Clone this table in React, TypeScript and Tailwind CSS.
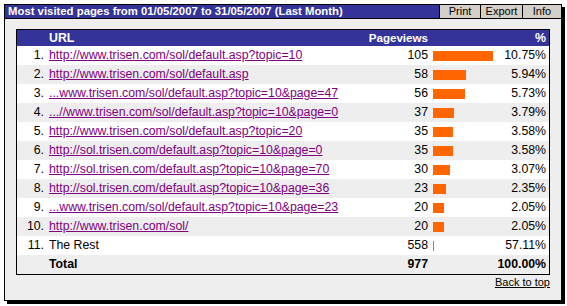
import React from "react";

type Row = { url: string; views: number; pct: string; link: boolean };

const rows: Row[] = [
  { url: "http://www.trisen.com/sol/default.asp?topic=10", views: 105, pct: "10.75%", link: true },
  { url: "http://www.trisen.com/sol/default.asp", views: 58, pct: "5.94%", link: true },
  { url: "...www.trisen.com/sol/default.asp?topic=10&page=47", views: 56, pct: "5.73%", link: true },
  { url: "...//www.trisen.com/sol/default.asp?topic=10&page=0", views: 37, pct: "3.79%", link: true },
  { url: "http://www.trisen.com/sol/default.asp?topic=20", views: 35, pct: "3.58%", link: true },
  { url: "http://sol.trisen.com/default.asp?topic=10&page=0", views: 35, pct: "3.58%", link: true },
  { url: "http://sol.trisen.com/default.asp?topic=10&page=70", views: 30, pct: "3.07%", link: true },
  { url: "http://sol.trisen.com/default.asp?topic=10&page=36", views: 23, pct: "2.35%", link: true },
  { url: "...www.trisen.com/sol/default.asp?topic=10&page=23", views: 20, pct: "2.05%", link: true },
  { url: "http://www.trisen.com/sol/", views: 20, pct: "2.05%", link: true },
  { url: "The Rest", views: 558, pct: "57.11%", link: false },
];

const font = { fontFamily: '"Liberation Sans", Arial, sans-serif' };

export default function App() {
  return (
    <div className="w-[567px] h-[306px] bg-white pl-[4px] pt-[4px]" style={font}>
      <div className="w-[558px] h-[297px] border border-black bg-[#eeeeee] shadow-[3px_3px_0_#000] flex flex-col">
        <div className="h-[14px] border-b border-black bg-[#333399] flex items-stretch">
          <div className="flex-1 pl-[3px] text-white font-bold text-[11.35px] leading-[13px] whitespace-nowrap">
            Most visited pages from 01/05/2007 to 31/05/2007 (Last Month)
          </div>
          <div className="w-[41px] border-l border-black bg-[#d4d0c8] text-black text-[11px] leading-[13px] text-center">Print</div>
          <div className="w-[42px] border-l border-black bg-[#d4d0c8] text-black text-[11px] leading-[13px] text-center">Export</div>
          <div className="w-[39px] border-l border-black bg-[#d4d0c8] text-black text-[11px] leading-[13px] text-center">Info</div>
        </div>
        <div className="pt-[10px] pl-[11px] pr-[11px]">
          <div className="w-[534px] border border-black text-[12.3px] text-black">
            <div className="h-[16px] bg-[#333399] text-white font-bold grid grid-cols-[29px_321px_64px_66px_52px] items-center leading-[16px]">
              <div />
              <div className="pl-[3px]">URL</div>
              <div className="text-right pr-[3px] text-[11.6px]">Pageviews</div>
              <div />
              <div className="text-right pr-[3px]">%</div>
            </div>
            {rows.map((r, i) => (
              <div
                key={i}
                className={`h-[19px] grid grid-cols-[29px_321px_64px_66px_52px] items-center leading-[19px] ${i % 2 === 0 ? "bg-white" : "bg-[#eeeeee]"}`}
              >
                <div className="text-right pr-[2px]">{i + 1}.</div>
                <div className="pl-[3px] whitespace-nowrap">
                  {r.link ? <span className="text-[#800080] underline">{r.url}</span> : <span>{r.url}</span>}
                </div>
                <div className="text-right pr-[3px]">{r.views}</div>
                <div className="pl-[2px] flex items-center">
                  <div
                    className="h-[10px] bg-[#ff6600]"
                    style={{ width: `${r.link ? Math.round((r.views / 105) * 60) : 1}px` }}
                  />
                </div>
                <div className="text-right pr-[3px]">{r.pct}</div>
              </div>
            ))}
            <div className="h-[19px] bg-[#eeeeee] grid grid-cols-[29px_321px_64px_66px_52px] items-center leading-[19px] font-bold">
              <div />
              <div className="pl-[3px]">Total</div>
              <div className="text-right pr-[3px]">977</div>
              <div />
              <div className="text-right pr-[3px]">100.00%</div>
            </div>
          </div>
          <div className="flex justify-end mt-[1px]">
            <span className="text-[11px] leading-[13px] underline text-black">Back to top</span>
          </div>
        </div>
      </div>
    </div>
  );
}
